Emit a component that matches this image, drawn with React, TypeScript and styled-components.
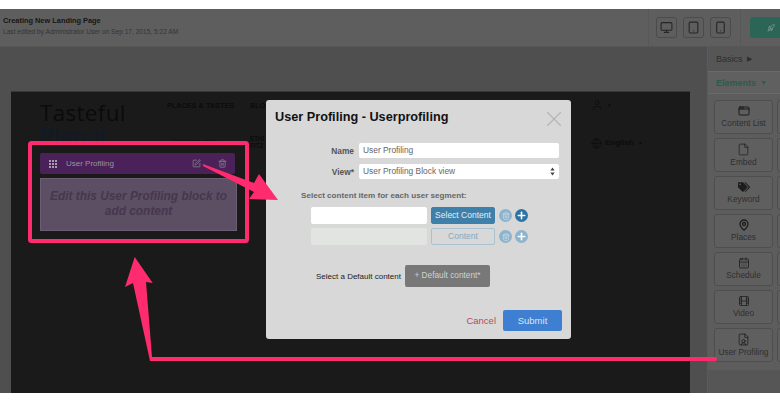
import React from "react";
import styled, { createGlobalStyle } from "styled-components";
import { Monitor, Tablet, Smartphone, Rocket, X, File, MapPin, CalendarDays, Film, FileUser, AppWindow, Plus, Trash2, SquarePen, User, Globe } from "lucide-react";
import { FaTags } from "react-icons/fa";

const Global = createGlobalStyle`
  html, body { margin: 0; padding: 0; background: #fff; }
  * { box-sizing: border-box; }
  body { font-family: "Liberation Sans", Arial, sans-serif; }
`;

const Page = styled.div`
  position: relative; width: 780px; height: 403px; overflow: hidden;
  padding: 9px 0 10px; display: flex; flex-direction: column; background: #fff;
`;
const Header = styled.header`
  height: 38px; flex: none; background: #5e5e5e; display: flex; align-items: stretch;
  border-bottom: 1px solid #575757; overflow: hidden;
`;
const TitleBlock = styled.div`flex: 1; padding: 7px 0 0 3px;`;
const PageTitle = styled.div`font-size: 7.4px; font-weight: bold; color: #161616; line-height: 10px;`;
const Edited = styled.div`font-size: 6.6px; color: #353535; line-height: 11px;`;
const Devices = styled.div`
  width: 93px; border-left: 1px solid #585858; border-right: 1px solid #585858;
  display: flex; gap: 6px; padding: 8px 0 0 7px;
`;
const DeviceBtn = styled.div`
  width: 21px; height: 21px; border: 1px solid #4b4b4b; border-radius: 3px;
  display: flex; align-items: center; justify-content: center; color: #262626;
`;
const PublishWrap = styled.div`width: 39px; padding: 8px 0 0 9px; overflow: hidden;`;
const Publish = styled.div`
  width: 60px; height: 21px; border-radius: 4px; background: #2b6556; color: #8d9c97;
  display: flex; align-items: center; padding-left: 17px;
`;
const Main = styled.div`flex: 1; display: flex; min-height: 0;`;
const Stage = styled.div`width: 707px; background: #4f4f4f; padding: 44px 17px 0 11px; display: flex;`;
const Canvas = styled.div`
  position: relative; flex: 1; background: #1a1a1a; border-top: 1px solid #383838;
  display: grid; grid-template-columns: 127px 83px 341px 1fr; padding: 6px 0 0 29px; align-content: start;
`;
const Logo = styled.div`
  font-family: "Open Sans", sans-serif; font-size: 22.4px; line-height: 23px; color: #0b0b0b; height: 46px; letter-spacing: .35px; padding-top: 3px;
`;
const Planet = styled.span`color: #0e1b2a; display: block;`;
const NavCol = styled.div`font-size: 7.3px; font-weight: bold; color: #0c0c0c; padding-top: 4px; line-height: 8px; white-space: nowrap;`;
const Tiny = styled.div<{ $bold?: boolean; $indent?: number }>`
  font-size: ${p => (p.$bold ? 6.3 : 6.2)}px; color: #0c0c0c; font-weight: ${p => (p.$bold ? "bold" : "normal")};
  line-height: 7px; white-space: nowrap; margin: ${p => (p.$bold ? 25 : 27)}px 0 0 ${p => p.$indent ?? 0}px;
`;
const RightCol = styled.div`color: #0c0c0c; display: flex; flex-direction: column; align-items: flex-start; padding-top: 1px;`;
const IconLine = styled.div`display: flex; align-items: center; gap: 3px; font-size: 8px; font-weight: bold; line-height: 12px;`;
const LangLine = styled(IconLine)`margin-top: 26px;`;
const Drop = styled.span`font-size: 5px; margin-left: 1px;`;

const Block = styled.div`position: absolute; left: 29px; top: 61px; width: 197px;`;
const BlockBar = styled.div`
  width: 195px; height: 21px; border-radius: 2px; background: #4a2159; color: #9c94a0;
  display: flex; align-items: center; font-size: 8px; padding-left: 9px;
`;
const GripIcon = styled.svg`display: block; color: #a59dab;`;
const BarLabel = styled.span`margin-left: 9px; flex: 1;`;
const BarIcon = styled.span<{ $mr: number }>`display: flex; margin-right: ${p => p.$mr}px; color: #8e8694;`;
const BlockBody = styled.div`
  margin-top: 4px; height: 53px; background: #5c4e63; border: 1px solid #6c5c74;
  color: #47364f; font-size: 11.9px; font-weight: bold; font-style: italic; line-height: 14.5px;
  text-align: center; padding: 10px 6px 0;
`;

const Sidebar = styled.aside`flex: 1; background: #565656; border-left: 1px solid #5b5b5b; overflow: hidden;`;
const Tab = styled.div<{ $h: number; $active?: boolean }>`
  height: ${p => p.$h}px; padding-left: 8px; display: flex; align-items: center; gap: 4px; font-size: 9px;
  color: ${p => (p.$active ? "#245f4e" : "#2e2e2e")}; font-weight: ${p => (p.$active ? "bold" : "normal")};
  background: ${p => (p.$active ? "#606060" : "#565656")};
  border-top: ${p => (p.$active ? "1px solid #6a6a6a" : "none")};
  border-bottom: ${p => (p.$active ? "1px solid #6a6a6a" : "none")};
`;
const Caret = styled.span`font-size: 7px;`;
const Tools = styled.div`
  background: #5d5d5d; padding: 6px 0 0 6px; height: 276px; display: grid; grid-template-columns: 59px 59px;
  grid-auto-rows: 33.5px; row-gap: 4.5px; column-gap: 4px;
`;
const Tool = styled.div`
  border: 1px solid #4e4e4e; border-radius: 3px; color: #2f2f2f; font-size: 8.3px; line-height: 9px;
  display: flex; flex-direction: column; align-items: center; justify-content: center; gap: 2px; white-space: nowrap; overflow: hidden;
  background: #5f5f5f;
`;
const ToolIcon = styled.span`display: flex; color: #1d1d1d;`;

const Modal = styled.div`
  position: absolute; left: 266px; top: 100px; width: 305px; height: 239px; background: #d8d8d8;
  border-radius: 3px; padding: 9px 9px 0; display: flex; flex-direction: column;
`;
const ModalHead = styled.div`display: flex; justify-content: space-between; height: 34px; color: #b4b4b4;`;
const ModalTitle = styled.h2`margin: 0; font-size: 12.7px; line-height: 17px; color: #111; font-weight: bold;`;
const CloseBox = styled.div`margin: -3.5px -4.5px 0 0; display: flex; height: 26px;`;
const FieldRow = styled.div`display: flex; align-items: center; height: 15px; margin-bottom: 6px;`;
const FieldLabel = styled.label`width: 79px; text-align: right; font-size: 8.4px; font-weight: bold; color: #555; margin-right: 5px;`;
const TextField = styled.div`
  width: 200px; height: 15px; background: #fff; border-radius: 2px; color: #666; font-size: 8.4px;
  line-height: 15px; padding: 0 4px; display: flex; justify-content: space-between; align-items: center;
`;
const SegHead = styled.div`font-size: 8.1px; font-weight: bold; color: #666; margin: 6px 0 0 26px; line-height: 10px;`;
const SegRow = styled.div<{ $mt: number }>`display: flex; align-items: center; margin: ${p => p.$mt}px 0 0 36px; height: 17px;`;
const SegInput = styled.div<{ $off?: boolean }>`width: 116px; height: 17px; border-radius: 2px; background: ${p => (p.$off ? "#e2e4e2" : "#fff")};`;
const SegBtn = styled.div<{ $off?: boolean }>`
  width: 64px; height: 17px; margin-left: 4px; border-radius: 2px; font-size: 8.5px; text-align: center; line-height: 15px;
  background: ${p => (p.$off ? "transparent" : "#3f80ab")}; color: ${p => (p.$off ? "#83a8c1" : "#e4edf3")};
  border: 1px solid ${p => (p.$off ? "#a9c2d2" : "#3f80ab")};
`;
const RoundBtn = styled.span<{ $ml: number; $bg: string; $pale?: boolean }>`
  width: 13px; height: 13px; border-radius: 50%; margin-left: ${p => p.$ml}px; display: flex; align-items: center; justify-content: center;
  color: ${p => (p.$pale ? "#d3dee5" : "#fff")}; background: ${p => p.$bg};
`;
const DefaultRow = styled.div`display: flex; align-items: center; margin: 20px 0 0 41px;`;
const DefaultLabel = styled.span`font-size: 8px; color: #222; width: 89px; white-space: nowrap;`;
const DefaultBtn = styled.div`
  width: 85px; height: 22px; background: #787878; border-radius: 2px; color: #d0d0d0; font-size: 8.3px; text-align: center; line-height: 21px;
`;
const Footer = styled.div`display: flex; justify-content: flex-end; align-items: center; margin: 23px 0 0; gap: 7px;`;
const Cancel = styled.span`font-size: 9.5px; color: #b94a5a;`;
const Submit = styled.div`width: 59px; height: 21px; border-radius: 2px; background: #3f7fd1; color: #d6e4f5; font-size: 9.5px; text-align: center; line-height: 21px;`;
const Annotations = styled.svg`position: absolute; left: 0; top: 0; pointer-events: none;`;

const P = "#fe2c6f";

const CalloutArrows = () => (
  <Annotations width="780" height="403" viewBox="0 0 780 403">
    <rect x="30" y="143" width="217" height="98" rx="1.5" fill="none" stroke={P} strokeWidth="4" />
    <path d="M203 164 L254 183 L259 174 L278 200 L249 199 L254 192 L203 166 Z" fill={P} />
    <path d="M134.7 257 L125 287 L133 283 L150 361 L716 361 Q718 359 716 357 L152 357 L146 282 L152.7 283 Z" fill={P} />
  </Annotations>
);

const tools: [string, React.ReactNode][] = [
  ["Content List", <AppWindow size={12} strokeWidth={2} />],
  ["", null],
  ["Embed", <File size={13} strokeWidth={1.3} />],
  ["", null],
  ["Keyword", <FaTags size={12} />],
  ["", null],
  ["Places", <MapPin size={12} strokeWidth={2.6} />],
  ["", null],
  ["Schedule", <CalendarDays size={12} strokeWidth={1.6} />],
  ["", null],
  ["Video", <Film size={12} strokeWidth={1.5} />],
  ["", null],
  ["User Profiling", <FileUser size={13} strokeWidth={1.4} />],
  ["", null],
];

const SelectArrows = () => (
  <svg width="5" height="9" viewBox="0 0 5 9"><path d="M2.5 0.5 L4.7 3.5 H0.3 Z M2.5 8.5 L4.7 5.5 H0.3 Z" fill="#444" /></svg>
);

const DragGrip = () => (
  <GripIcon width="8" height="8" viewBox="0 0 8 8">
    {[0, 3, 6].flatMap(x => [0, 3, 6].map(y => <rect key={`${x}-${y}`} x={x} y={y} width="2" height="2" fill="currentColor" />))}
  </GripIcon>
);

export default function App() {
  return (
    <Page>
      <Global />
      <Header>
        <TitleBlock>
          <PageTitle>Creating New Landing Page</PageTitle>
          <Edited>Last edited by Administrator User on Sep 17, 2015, 5:22 AM</Edited>
        </TitleBlock>
        <Devices>
          <DeviceBtn><Monitor size={13} /></DeviceBtn>
          <DeviceBtn><Tablet size={13} /></DeviceBtn>
          <DeviceBtn><Smartphone size={13} /></DeviceBtn>
        </Devices>
        <PublishWrap><Publish><Rocket size={8} /></Publish></PublishWrap>
      </Header>
      <Main>
        <Stage>
          <Canvas>
            <Logo>Tasteful<Planet>Planet</Planet></Logo>
            <NavCol>PLACES &amp; TASTES<Tiny $indent={6}>Our latest article</Tiny></NavCol>
            <NavCol>BLOG<Tiny $bold>ETHI<br />FITZ</Tiny></NavCol>
            <RightCol>
              <IconLine><User size={12} strokeWidth={1.5} /><Drop>▼</Drop></IconLine>
              <LangLine><Globe size={11} strokeWidth={1.5} />English<Drop>▼</Drop></LangLine>
            </RightCol>
            <Block>
              <BlockBar>
                <DragGrip />
                <BarLabel>User Profiling</BarLabel>
                <BarIcon $mr={17}><SquarePen size={9} /></BarIcon>
                <BarIcon $mr={8}><Trash2 size={9} /></BarIcon>
              </BlockBar>
              <BlockBody>Edit this User Profiling block to add content</BlockBody>
            </Block>
          </Canvas>
        </Stage>
        <Sidebar>
          <Tab $h={24}>Basics <Caret>▶</Caret></Tab>
          <Tab $h={23} $active>Elements <Caret>▼</Caret></Tab>
          <Tools>
            {tools.map(([label, icon], i) => (
              <Tool key={i}><ToolIcon>{icon}</ToolIcon>{label}</Tool>
            ))}
          </Tools>
        </Sidebar>
      </Main>
      <Modal>
        <ModalHead>
          <ModalTitle>User Profiling - Userprofiling</ModalTitle>
          <CloseBox><X size={26} strokeWidth={1} /></CloseBox>
        </ModalHead>
        <FieldRow><FieldLabel>Name</FieldLabel><TextField>User Profiling</TextField></FieldRow>
        <FieldRow>
          <FieldLabel>View*</FieldLabel>
          <TextField>User Profiling Block view<SelectArrows /></TextField>
        </FieldRow>
        <SegHead>Select content item for each user segment:</SegHead>
        <SegRow $mt={6}>
          <SegInput />
          <SegBtn>Select Content</SegBtn>
          <RoundBtn $ml={4} $bg="#8db4cf" $pale><Trash2 size={8} /></RoundBtn>
          <RoundBtn $ml={3} $bg="#2d73a6"><Plus size={11} strokeWidth={3.4} /></RoundBtn>
        </SegRow>
        <SegRow $mt={4}>
          <SegInput $off />
          <SegBtn $off>Content</SegBtn>
          <RoundBtn $ml={4} $bg="#8db4cf" $pale><Trash2 size={8} /></RoundBtn>
          <RoundBtn $ml={3} $bg="#8db4cf"><Plus size={11} strokeWidth={3.4} /></RoundBtn>
        </SegRow>
        <DefaultRow>
          <DefaultLabel>Select a Default content</DefaultLabel>
          <DefaultBtn>+ Default content*</DefaultBtn>
        </DefaultRow>
        <Footer>
          <Cancel>Cancel</Cancel>
          <Submit>Submit</Submit>
        </Footer>
      </Modal>
      <CalloutArrows />
    </Page>
  );
}
